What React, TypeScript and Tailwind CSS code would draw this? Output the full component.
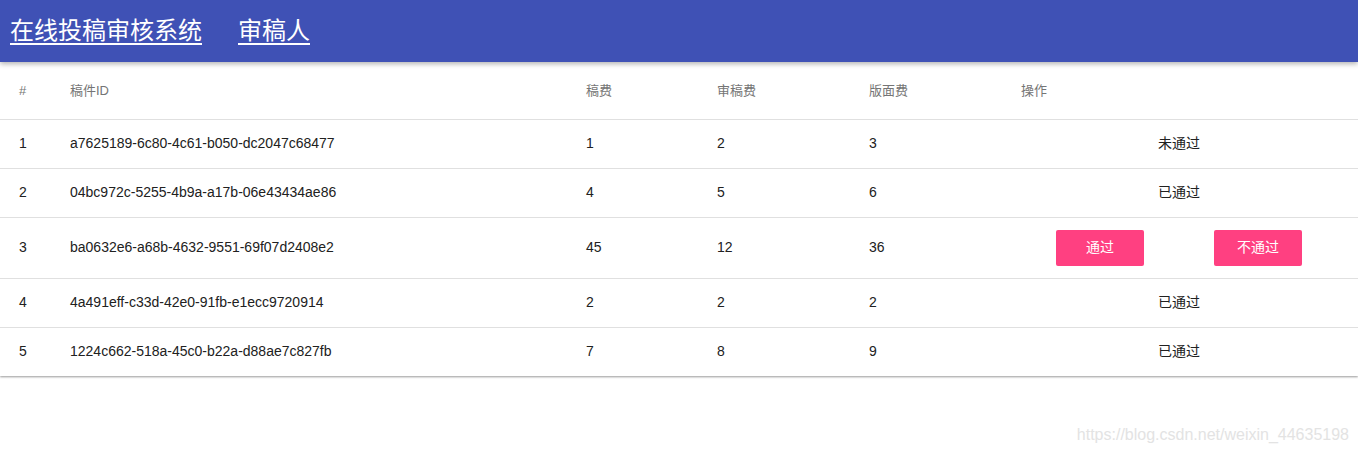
const rows = [
  { no: 1, id: 'a7625189-6c80-4c61-b050-dc2047c68477', fee: 1, review: 2, page: 3, status: '未通过' },
  { no: 2, id: '04bc972c-5255-4b9a-a17b-06e43434ae86', fee: 4, review: 5, page: 6, status: '已通过' },
  { no: 3, id: 'ba0632e6-a68b-4632-9551-69f07d2408e2', fee: 45, review: 12, page: 36, status: null },
  { no: 4, id: '4a491eff-c33d-42e0-91fb-e1ecc9720914', fee: 2, review: 2, page: 2, status: '已通过' },
  { no: 5, id: '1224c662-518a-45c0-b22a-d88ae7c827fb', fee: 7, review: 8, page: 9, status: '已通过' },
];

const font = "font-['Liberation_Sans','Noto_Sans_CJK_SC',sans-serif]";

export default function App() {
  return (
    <div className={`min-h-[453px] bg-white ${font} relative`}>
      <nav className="h-[62px] bg-[#3f51b5] flex items-center pl-[10px] gap-[36px] shadow-[0_2px_5px_rgba(0,0,0,0.3)] relative z-10">
        <a className="text-white text-[24px] underline underline-offset-[4px] decoration-[2px] leading-none">在线投稿审核系统</a>
        <a className="text-white text-[24px] underline underline-offset-[4px] decoration-[2px] leading-none">审稿人</a>
      </nav>

      <table className="w-full table-fixed border-collapse text-[14px] text-[#212121] shadow-[0_1px_2px_rgba(0,0,0,0.4)]">
        <colgroup>
          <col className="w-[55px]" />
          <col className="w-[516px]" />
          <col className="w-[131px]" />
          <col className="w-[152px]" />
          <col className="w-[152px]" />
          <col />
        </colgroup>
        <thead>
          <tr className="h-[57px] border-b border-[#e0e0e0] text-left text-[13px] text-[#757575]">
            <th className="pl-[19px] font-normal">#</th>
            <th className="pl-[15px] font-normal">稿件ID</th>
            <th className="pl-[15px] font-normal">稿费</th>
            <th className="pl-[15px] font-normal">审稿费</th>
            <th className="pl-[15px] font-normal">版面费</th>
            <th className="pl-[15px] font-normal">操作</th>
          </tr>
        </thead>
        <tbody>
          {rows.map((r) => (
            <tr key={r.no} className={`${r.status ? 'h-[49px]' : 'h-[61px]'} border-b border-[#e0e0e0] last:border-b-0`}>
              <td className="pl-[19px]">{r.no}</td>
              <td className="pl-[15px]">{r.id}</td>
              <td className="pl-[15px]">{r.fee}</td>
              <td className="pl-[15px]">{r.review}</td>
              <td className="pl-[15px]">{r.page}</td>
              <td>
                {r.status ? (
                  <div className="text-center pr-[6px]">{r.status}</div>
                ) : (
                  <div className="flex pl-[50px] gap-[70px]">
                    <button className="w-[88px] h-[36px] rounded-[2px] bg-[#ff4081] text-white text-[14px]">通过</button>
                    <button className="w-[88px] h-[36px] rounded-[2px] bg-[#ff4081] text-white text-[14px]">不通过</button>
                  </div>
                )}
              </td>
            </tr>
          ))}
        </tbody>
      </table>

      <div className="absolute right-[9px] top-[423px] text-[16px] text-[#e3e3e3]">https://blog.csdn.net/weixin_44635198</div>
    </div>
  );
}
